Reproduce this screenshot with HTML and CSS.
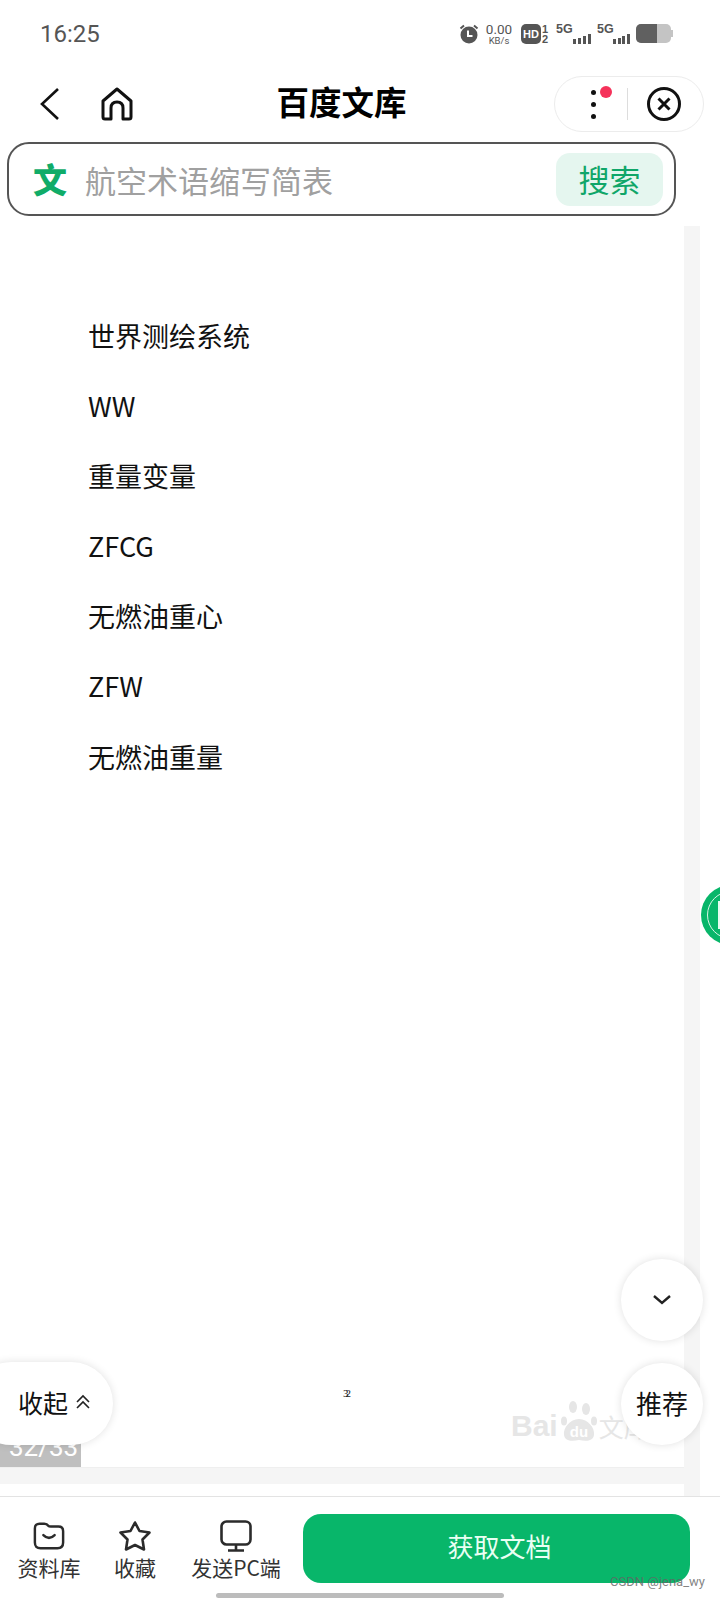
FILE: index.html
```html
<!DOCTYPE html>
<html lang="zh-CN">
<head>
    <meta charset="UTF-8">
    <meta name="viewport" content="width=device-width, initial-scale=1.0">
    <title>百度文库</title>
    <link rel="stylesheet" href="styles.css">
</head>
<body>
    <div class="app">
        <!-- Status bar -->
        <div class="status-bar">
            <span class="time">16:25</span>
            <div class="status-icons">
                <svg class="alarm" width="20" height="20" viewBox="0 0 20 20">
                    <circle cx="10" cy="11" r="8.5" fill="#555"/>
                    <path d="M1.5 4.5 L5 1.5 M18.5 4.5 L15 1.5" stroke="#555" stroke-width="2" fill="none"/>
                    <path d="M9 6.5 V12 H13.5" stroke="#fff" stroke-width="2" fill="none"/>
                </svg>
                <div class="speed"><span>0.00</span><small>KB/s</small></div>
                <span class="hd">HD</span>
                <div class="sim-num"><span>1</span><span>2</span></div>
                <div class="signal signal-one">
                    <b>5G</b>
                    <svg width="20" height="10" viewBox="0 0 20 10"><path d="M2 5h3v5H2zM7 4h3v6H7zM12 2h3v8h-3zM17 0h3v10h-3z" fill="#555"/></svg>
                </div>
                <div class="signal signal-two">
                    <b>5G</b>
                    <svg width="24" height="10" viewBox="0 0 24 10"><path d="M7 5h3v5H7zM12 4h3v6h-3zM16 2h3v8h-3zM21 0h3v10h-3z" fill="#555"/></svg>
                </div>
                <div class="battery"><span class="battery-level"></span></div>
            </div>
        </div>

        <!-- Nav -->
        <header class="nav">
            <div class="nav-left">
                <svg width="22" height="32" viewBox="0 0 22 32"><path d="M19 1 L3 16 L19 31" fill="none" stroke="#111" stroke-width="2.6"/></svg>
                <svg width="34" height="34" viewBox="0 0 34 34"><path d="M3 14 L17 2 L31 14 V30 Q31 32 29 32 H23 V21 Q23 15 17 15 Q11 15 11 21 V32 H5 Q3 32 3 30 Z" fill="none" stroke="#111" stroke-width="3" stroke-linejoin="round"/></svg>
            </div>
            <h1 class="nav-title">百度文库</h1>
            <div class="capsule">
                <div class="more">
                    <i></i><i></i><i></i>
                    <span class="red-dot"></span>
                </div>
                <span class="capsule-line"></span>
                <svg width="34" height="34" viewBox="0 0 34 34"><circle cx="17" cy="17" r="15.5" fill="none" stroke="#111" stroke-width="3"/><path d="M11.5 11.5 L22.5 22.5 M22.5 11.5 L11.5 22.5" stroke="#111" stroke-width="3"/></svg>
            </div>
        </header>

        <!-- Search -->
        <form class="search-box">
            <span class="search-logo">文</span>
            <span class="search-text">航空术语缩写简表</span>
            <span class="search-btn">搜索</span>
        </form>

        <!-- Document -->
        <main class="doc">
            <div class="doc-scroll">
                <section class="page">
                    <ul class="term-list">
                        <li>世界测绘系统</li>
                        <li>WW</li>
                        <li>重量变量</li>
                        <li>ZFCG</li>
                        <li>无燃油重心</li>
                        <li>ZFW</li>
                        <li>无燃油重量</li>
                    </ul>
                    <span class="page-mark">32</span>
                    <span class="page-count">32/33</span>
                    <div class="watermark">
                        <span>Bai</span>
                        <svg width="40" height="42" viewBox="0 0 40 42" fill="#e6e6e6">
                            <ellipse cx="5" cy="21" rx="3" ry="4.5"/>
                            <ellipse cx="14" cy="7" rx="4" ry="6"/>
                            <ellipse cx="27" cy="9" rx="4" ry="6"/>
                            <ellipse cx="35" cy="21" rx="3" ry="4.5"/>
                            <path d="M20 19 C11 19 4 28 5 35 C6 42 14 41 20 40 C26 41 34 42 35 35 C36 28 29 19 20 19 Z"/>
                            <text x="20" y="37" text-anchor="middle" font-family="Liberation Sans" font-size="15" font-weight="700" fill="#fff">du</text>
                        </svg>
                        <span>文库</span>
                    </div>
                </section>
                <section class="page-next"></section>
            </div>

            <button class="float-btn btn-down" type="button">
                <svg width="20" height="12" viewBox="0 0 20 12"><path d="M2 2 L10 9 L18 2" fill="none" stroke="#222" stroke-width="2.4"/></svg>
            </button>
            <button class="float-btn btn-recommend" type="button">推荐</button>
            <button class="collapse-btn" type="button">
                收起
                <svg width="14" height="16" viewBox="0 0 14 16"><path d="M1 8 L7 2 L13 8 M1 14 L7 8 L13 14" fill="none" stroke="#222" stroke-width="1.6"/></svg>
            </button>
            <div class="side-badge"><span></span></div>
        </main>

        <!-- Bottom toolbar -->
        <footer class="toolbar">
            <div class="tool tool-lib">
                <svg width="32" height="28" viewBox="0 0 34 30"><path d="M2 7 Q2 2 7 2 H12 Q15 2 16 4 Q17 5 19 5 H27 Q32 5 32 10 V22 Q32 28 26 28 H8 Q2 28 2 22 Z" fill="none" stroke="#2b2b2b" stroke-width="2.6"/><path d="M11 14 Q17 20 23 14" fill="none" stroke="#2b2b2b" stroke-width="2.6" stroke-linecap="round"/></svg>
                <span>资料库</span>
            </div>
            <div class="tool tool-fav">
                <svg width="34" height="32" viewBox="0 0 34 32"><path d="M17 2.5 L21.5 11 L31.5 12.5 L24.5 19.5 L26 29.5 L17 25 L8 29.5 L9.5 19.5 L2.5 12.5 L12.5 11 Z" fill="none" stroke="#2b2b2b" stroke-width="2.6" stroke-linejoin="round"/></svg>
                <span>收藏</span>
            </div>
            <div class="tool tool-pc">
                <svg width="32" height="32" viewBox="0 0 32 32"><rect x="1.5" y="1.5" width="29" height="23" rx="5" fill="none" stroke="#2b2b2b" stroke-width="2.6"/><path d="M16 25 V30 M8 30.5 H24" stroke="#2b2b2b" stroke-width="2.6"/></svg>
                <span>发送PC端</span>
            </div>
            <button class="get-btn" type="button">获取文档</button>
        </footer>
        <div class="home-bar"></div>
        <span class="csdn-mark">CSDN @jena_wy</span>
    </div>
</body>
</html>
```

FILE: styles.css
```css
:root {
    --green: #08b66a;
    --text-dark: #111;
    --grey-strip: #f5f5f5;
    --status: #555;
    --font-cjk: "Noto Sans CJK SC", "Noto Sans", sans-serif;
}
* { margin: 0; padding: 0; box-sizing: border-box; }
body { width: 720px; height: 1600px; overflow: hidden; background: #fff; font-family: var(--font-cjk); color: var(--text-dark); }
.app { position: relative; display: flex; flex-direction: column; height: 1600px; overflow: hidden; }

/* status bar */
.status-bar { display: flex; justify-content: space-between; height: 76px; padding: 22px 49px 0 40px; flex-shrink: 0; }
.time { font-family: Roboto, sans-serif; font-size: 24px; line-height: 24px; color: var(--status); }
.status-icons { display: flex; align-items: flex-start; height: 22px; margin-top: 2px; color: var(--status); }
.speed { display: flex; flex-direction: column; align-items: center; width: 28px; margin-left: 6px; font-family: Roboto, sans-serif; line-height: 10px; }
.speed span { font-size: 13.5px; line-height: 11px; }
.speed small { font-size: 9.5px; line-height: 10px; margin-top: 1px; }
.hd { width: 20px; height: 20px; margin-left: 8px; border-radius: 5px; background: var(--status); color: #fff; font-family: "Liberation Sans", sans-serif; font-size: 11px; font-weight: 700; line-height: 20px; text-align: center; }
.sim-num { display: flex; flex-direction: column; width: 10px; margin-left: 1px; font-family: "Liberation Sans", sans-serif; font-size: 11px; font-weight: 700; line-height: 10px; }
.signal { position: relative; height: 20px; }
.signal b { display: block; font-family: "Liberation Sans", sans-serif; font-size: 12.5px; line-height: 10px; }
.signal svg { position: absolute; right: 0; bottom: 0; }
.signal-one { width: 35px; margin-left: 4px; }
.signal-two { width: 33px; margin-left: 6px; }
.battery { position: relative; display: flex; width: 35px; height: 19px; margin-left: 6px; border-radius: 5px; background: #c4c4c4; }
.battery::after { content: ''; position: absolute; right: -2px; top: 6px; width: 2px; height: 7px; background: #c4c4c4; }
.battery-level { width: 21px; border-radius: 5px 0 0 5px; background: #606060; }

/* nav */
.nav { display: flex; align-items: center; height: 56px; padding: 0 16px 0 39px; flex-shrink: 0; }
.nav-left { display: flex; align-items: center; gap: 39px; width: 97px; }
.nav-title { flex: 1; padding-right: 7px; font-size: 32.5px; font-weight: 700; line-height: 50px; height: 56px; text-align: center; color: #000; }
.capsule { display: flex; align-items: center; width: 150px; height: 56px; padding-left: 36px; border: 1px solid #ececec; border-radius: 28px; }
.more { position: relative; display: flex; flex-direction: column; gap: 7px; width: 5px; }
.more i { width: 5px; height: 5px; border-radius: 50%; background: #111; }
.red-dot { position: absolute; left: 9px; top: -4px; width: 12px; height: 12px; border-radius: 50%; background: #f5325a; }
.capsule-line { width: 1px; height: 32px; margin-left: 31px; margin-right: 19px; background: #ddd; }

/* search */
.search-box { display: flex; align-items: center; width: 669px; height: 74px; margin: 10px 0 0 7px; padding: 0 11px 0 24px; border: 2px solid #555; border-radius: 22px; flex-shrink: 0; }
.search-logo { width: 35px; font-size: 34px; font-weight: 900; color: #10ac68; line-height: 74px; }
.search-text { flex: 1; margin-left: 17px; font-size: 31px; color: #a0a0a0; white-space: nowrap; }
.search-btn { width: 107px; height: 53px; border-radius: 14px; background: #e5f6ef; color: #10a669; font-size: 31px; line-height: 52px; text-align: center; }

/* document */
.doc { position: relative; flex: 1; margin-top: 10px; min-height: 0; }
.doc-scroll { width: 700px; height: 100%; border-right: 16px solid var(--grey-strip); background: var(--grey-strip); }
.page { position: relative; height: 1241px; background: #fff; box-shadow: 0 1px 0 #efefef; overflow: hidden; }
.page-next { height: 13px; margin-top: 17px; background: #fff; }
.term-list { list-style: none; padding: 74.5px 0 0 88px; }
.term-list li { height: 70.2px; font-size: 27px; line-height: 70.2px; color: #111; }
.page-mark { position: absolute; left: 343px; top: 1162px; font-family: "Liberation Serif", serif; font-size: 11px; letter-spacing: -3px; line-height: 10px; color: #222; }
.page-count { position: absolute; left: 0; bottom: 0; width: 81px; height: 40px; padding-left: 9px; background: #bfbfbf; color: #fff; font-family: Roboto, sans-serif; font-size: 26px; line-height: 40px; }
.watermark { position: absolute; left: 511px; top: 1172px; display: flex; align-items: flex-end; height: 44px; color: #e6e6e6; font-family: "Liberation Sans", sans-serif; font-size: 30px; font-weight: 700; line-height: 32px; white-space: nowrap; }
.watermark svg { margin-left: 1px; }
.watermark span:last-child { font-family: var(--font-cjk); font-weight: 400; font-size: 25px; }

/* floating buttons */
.float-btn { position: absolute; left: 621px; display: flex; align-items: center; justify-content: center; width: 82px; height: 82px; border: none; border-radius: 50%; background: #fff; box-shadow: 0 0 8px rgba(0, 0, 0, 0.12); font-family: var(--font-cjk); font-size: 26px; color: #111; }
.btn-down { top: 1033px; }
.btn-recommend { top: 1137px; padding-bottom: 4px; }
.collapse-btn { position: absolute; left: -30px; top: 1136px; display: flex; align-items: center; gap: 8px; width: 143px; height: 83px; padding: 0 0 4px 48px; border: none; border-radius: 42px; background: #fff; box-shadow: 0 0 8px rgba(0, 0, 0, 0.12); font-family: var(--font-cjk); font-size: 25px; color: #111; }
.side-badge { position: absolute; left: 701px; top: 659px; width: 60px; height: 60px; border-radius: 50%; background: var(--green); }
.side-badge span { display: block; width: 48px; height: 48px; margin: 6px; border: 1.5px solid #d8f5e6; border-radius: 50%; }
.side-badge::after { content: ''; position: absolute; left: 17px; top: 16px; width: 3px; height: 28px; background: #e6fbf0; }

/* toolbar */
.toolbar { position: relative; display: flex; align-items: flex-start; height: 104px; border-top: 1px solid #e3e3e3; background: #fff; flex-shrink: 0; }
.tool { position: absolute; top: 23px; display: flex; flex-direction: column; align-items: center; font-size: 21px; line-height: 28px; color: #333; white-space: nowrap; }
.tool svg { height: 32px; margin-bottom: 1px; }
.tool-lib { left: 17px; width: 64px; }
.tool-fav { left: 114px; width: 42px; }
.tool-pc { left: 190px; width: 92px; }
.get-btn { position: absolute; left: 303px; top: 17px; width: 387px; height: 69px; padding: 0 0 6px 6px; border: none; border-radius: 18px; background: var(--green); color: #e8fff3; font-family: var(--font-cjk); font-size: 26px; }
.home-bar { position: absolute; left: 216px; top: 1593px; width: 288px; height: 5px; border-radius: 3px; background: #bcbcbc; }
.csdn-mark { position: absolute; left: 610px; top: 1573px; font-family: Roboto, sans-serif; font-size: 13px; line-height: 18px; color: rgba(100, 100, 100, 0.8); white-space: nowrap; }
```
